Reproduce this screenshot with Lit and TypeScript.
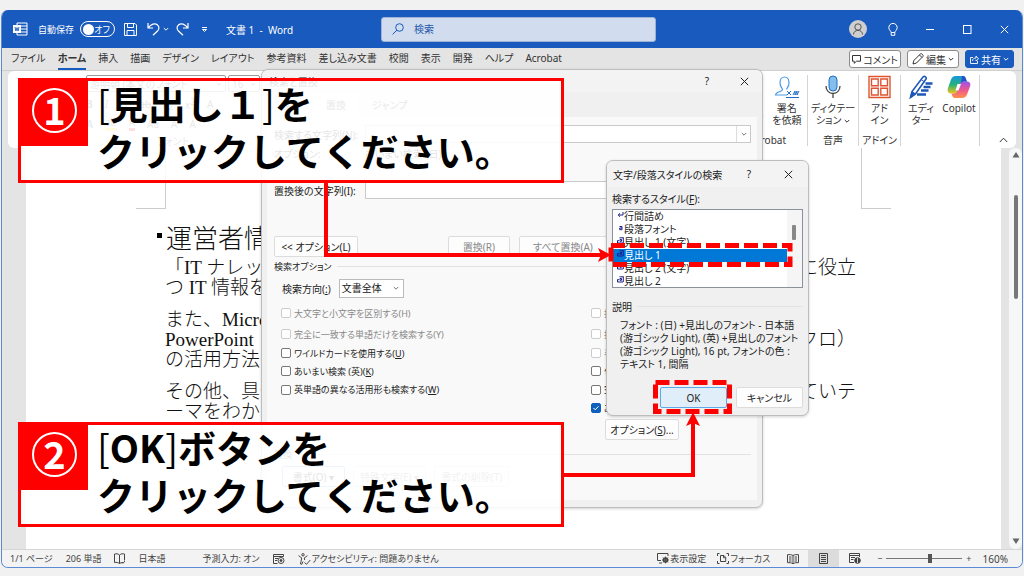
import { LitElement, html, css, svg } from "lit";
import { customElement, property } from "lit/decorators.js";

const base = css`
  * { box-sizing: border-box; }
  button, input, select {
    font: inherit; color: inherit; margin: 0; padding: 0;
    border: 0; background: none; border-radius: 0; appearance: none;
    font-feature-settings: inherit; white-space: nowrap;
  }
  a { color: inherit; text-decoration: none; }
  svg { display: block; flex: none; }
  u { text-underline-offset: 1px; }
`;

const chevron = (size = 6) => html`<svg width=${size} height=${size} viewBox="0 0 6 6" fill="none" stroke="currentColor"><path d="M.8 2 3 4.2 5.2 2" /></svg>`;
const cross = html`<svg width="9" height="9" viewBox="0 0 9 9" stroke="currentColor" fill="none"><path d="M.8.8 8.2 8.2M8.2.8.8 8.2" /></svg>`;

@customElement("title-bar")
class TitleBar extends LitElement {
  static styles = [base, css`
    :host { display: flex; align-items: center; height: 38px; padding: 0 13px 0 11px; background: #185abd; color: #fff; }
    .group { display: flex; align-items: center; flex: none; }
    .left { width: 368px; }
    .auto { margin: 0 6px 0 10px; font-size: 9px; }
    .toggle { display: flex; align-items: center; justify-content: space-between; width: 35px; height: 16px; padding: 0 4px 0 2px; border: 1px solid #fff; border-radius: 8px; font-size: 9px; }
    .knob { width: 11px; height: 11px; border-radius: 50%; background: #fff; }
    .save { margin-left: 9px; }
    .undo { margin-left: 10px; }
    .more { margin: 0 7px 0 3px; }
    .custom { margin-left: 12px; }
    .name { margin-left: 18px; white-space: pre; }
    .search { display: flex; align-items: center; flex: 0 1 275px; height: 25px; gap: 10px; padding: 0 10px; background: #d1dcef; border: 1px solid #9eb2d6; border-radius: 3px; color: #185abd; }
    .search input { flex: 1; min-width: 0; }
    .search input::placeholder { color: #2558a8; opacity: 1; }
    .right { margin-left: auto; gap: 28px; }
    .user { margin-right: -7px; }
  `];
  render() {
    return html`
      <div class="group left">
        <svg width="15" height="14" viewBox="0 0 15 14" fill="none" stroke="#fff"><path d="M4 3V1h10v12H4v-2M8 4h6M8 7h6M8 10h6" /><rect x=".5" y="3.5" width="7" height="7" fill="#fff" /><path d="m2 5 .9 4L4 5.6 5.1 9 6 5" stroke="#185abd" stroke-width=".9" /></svg>
        <span class="auto">自動保存</span>
        <button class="toggle" role="switch" aria-checked="false" aria-label="自動保存"><span class="knob"></span>オフ</button>
        <button class="save" aria-label="保存"><svg width="13" height="13" viewBox="0 0 13 13" fill="none" stroke="#fff"><path d="M.5.5H11L12.500 2v10.500H.5zM3.500.5v4h6v-4M3 12.500v-5h7v5" /></svg></button>
        <button class="undo" aria-label="元に戻す"><svg width="13" height="14" viewBox="0 0 13 14" fill="none" stroke="#fff" stroke-width="1.200"><path d="M1 1v5h5M1.200 5.800C4 2 8 .8 10.500 3c2.300 2.200 1.500 4.500 0 6L6 13.300" /></svg></button>
        <button class="more" aria-label="元に戻す履歴">${chevron()}</button>
        <button aria-label="やり直し"><svg width="13" height="14" viewBox="0 0 13 14" fill="none" stroke="#fff" stroke-width="1.200"><path d="M12 1v5H7M11.800 5.800C9 2 5 .8 2.500 3c-2.300 2.200-1.500 4.500 0 6L7 13.300" /></svg></button>
        <button class="custom" aria-label="クイック アクセス"><svg width="7" height="7" viewBox="0 0 7 7" fill="none" stroke="#fff"><path d="M1 1.500h5M1.500 3.500 3.500 5.500l2-2z" /></svg></button>
        <span class="name">文書 1  -  Word</span>
      </div>
      <label class="search">
        <svg width="12" height="12" viewBox="0 0 12 12" fill="none" stroke="currentColor"><circle cx="7.500" cy="4.500" r="3.800" /><path d="M4.800 7.200.6 11.400" /></svg>
        <input type="text" placeholder="検索" aria-label="検索" />
      </label>
      <div class="group right">
        <svg class="user" width="18" height="18" viewBox="0 0 18 18"><circle cx="9" cy="9" r="9" fill="#cfcfcf" /><g fill="none" stroke="#555"><circle cx="9" cy="7" r="3.200" /><path d="M4.500 14.500c0-5.500 9-5.500 9 0" /></g></svg>
        <svg width="10" height="13" viewBox="0 0 10 13" fill="none" stroke="#fff"><path d="M3.200 9.500C3 8 .8 7 .8 4.600a4.200 4.200 0 0 1 8.400 0C9.200 7 7 8 6.800 9.500zM3.200 9.500v2.800h3.600V9.500" /></svg>
        <button aria-label="最小化"><svg width="9" height="9" viewBox="0 0 9 9" stroke="#fff"><path d="M0 4.500h8" /></svg></button>
        <button aria-label="最大化"><svg width="9" height="9" viewBox="0 0 9 9" fill="none" stroke="#fff"><rect x=".5" y=".5" width="7.500" height="8" /></svg></button>
        <button aria-label="閉じる">${cross}</button>
      </div>`;
  }
}

@customElement("ribbon-tabs")
class RibbonTabs extends LitElement {
  static styles = [base, css`
    :host { display: flex; align-items: center; height: 23px; padding: 0 8px 0 9px; background: #e4e4e4; border-bottom: 1px solid #cfcfcf; }
    nav { display: flex; gap: 12px; }
    a { line-height: 19px; padding-top: 1px; white-space: nowrap; border-bottom: 2px solid transparent; }
    .on { font-weight: 700; border-color: #185abd; }
    .actions { margin-left: auto; display: flex; gap: 6px; }
    button { display: flex; align-items: center; justify-content: center; gap: 2px; height: 18px; padding: 0 4px; border: 1px solid #8c8c8c; border-radius: 3px; background: #fff; }
    .note { padding: 0 2px; }
    .share { background: #185abd; border-color: #185abd; color: #fff; }
  `];
  private tabs = ["ファイル", "ホーム", "挿入", "描画", "デザイン", "レイアウト", "参考資料", "差し込み文書", "校閲", "表示", "開発", "ヘルプ", "Acrobat"];
  render() {
    return html`
      <nav>${this.tabs.map(t => html`<a href="#" class=${t === "ホーム" ? "on" : ""}>${t}</a>`)}</nav>
      <div class="actions">
        <button class="note"><svg width="9" height="9" viewBox="0 0 9 9" fill="none" stroke="currentColor"><path d="M.5.5h8v5.700h-4L2.200 8.300V6.200H.5z" /></svg>コメント</button>
        <button><svg width="12" height="12" viewBox="0 0 12 12" fill="none" stroke="currentColor"><path d="m1 11 .8-3.500L8.500.9c1-.9 3.300 1.400 2.500 2.500l-6.600 6.700zM7.500 2 10 4.500" /></svg>編集 ${chevron()}</button>
        <button class="share"><svg width="9" height="9" viewBox="0 0 9 9" fill="none" stroke="currentColor" stroke-width=".9"><path d="M3 2.500H.5v6h7V6M2.500 6c.2-2.200 1.400-3 3.500-3V1l2.500 2.800L6 6V4.700" /></svg>共有 ${chevron()}</button>
      </div>`;
  }
}

@customElement("ribbon-panel")
class RibbonPanel extends LitElement {
  static styles = [base, css`
    :host { display: flex; height: 77px; margin: 0 6px; padding: 4px 4px 2px 10px; background: #fff; border-radius: 6px; }
    .clip { display: flex; align-items: flex-end; width: 68px; line-height: 12px; }
    .font { display: flex; flex-direction: column; gap: 4px; width: 174px; }
    .row { display: flex; align-items: center; gap: 12px; height: 17px; color: #444; white-space: nowrap; }
    .boxes { gap: 2px; }
    .box { display: flex; justify-content: space-between; align-items: center; flex: 1; height: 17px; padding: 0 3px; border: 1px solid #999; border-radius: 2px; }
    .small { flex: 0 0 32px; }
    .fill { color: #185abd; }
    .mark { border-bottom: 3px solid #ffe600; line-height: 12px; }
    .red { border-bottom: 3px solid #f00; line-height: 12px; }
    .cap { text-align: center; line-height: 12px; color: #555; }
    .groups { display: flex; margin-left: auto; }
    .group { display: flex; flex-direction: column; align-items: center; justify-content: space-between; padding: 0 3px; border-right: 1px solid #d4d4d4; }
    .items { display: flex; gap: 4px; }
    .item { display: flex; flex-direction: column; align-items: center; min-width: 34px; line-height: 12px; gap: 3px; }
    .item svg.big { height: 24px; }
    .words { display: block; text-align: center; }
    .words svg { display: inline; }
    .label { line-height: 12px; white-space: nowrap; height: 12px; }
    .fold { align-self: flex-end; padding: 0 4px 3px 19px; }
  `];
  render() {
    return html`
      <div class="clip">クリップボード</div>
      <div class="font">
        <div class="row boxes"><span class="box">游明朝 (本文のフォント ${chevron()}</span><span class="box small">16 ${chevron()}</span></div>
        <div class="row"><b>B</b><i>I</i><u>U</u><s>ab</s><span>x<sub>2</sub></span><span>x<sup>2</sup></span><span>A</span></div>
        <div class="row"><b class="fill">A</b><span class="mark">ab</span><span class="red">A</span><span>Aa</span><span>A</span><span>A</span></div>
        <span class="cap">フォント</span>
      </div>
      <div class="groups">
        <div class="group">
          <div class="items">
            <button class="item">
              <svg class="big" width="20" height="24" viewBox="0 0 20 24" fill="none" stroke="#4a9be8"><path d="M2 1.500h11l5 5v16H2z" /></svg>
              <span class="words">リンク<br />を共有</span>
            </button>
            <button class="item">
              <svg class="big" width="26" height="24" viewBox="0 0 26 24" fill="none" stroke="#4a9be8" stroke-width="1.200"><path d="M13 20H1.500c0-3.500 7-3 7-5.500 0-1.500-2.500-2.500-2.500-6.500s2-6 4.500-6S15 4 15 8s-2.500 5-2.500 6.500" /><path d="m13 16 4 4m0-4-4 4m6 0 2-4v4l2-4v4l2-4M12 22.500h13" stroke="#1f6fc5" stroke-width="1" /></svg>
              <span class="words">署名<br />を依頼</span>
            </button>
          </div>
          <span class="label">Acrobat</span>
        </div>
        <div class="group">
          <button class="item">
            <svg class="big" width="16" height="24" viewBox="0 0 16 24" fill="none" stroke="#444"><rect x="4" y="1" width="8" height="15" rx="4" fill="#83beec" stroke="#1f6fc5" /><path d="M1 11c0 10 14 10 14 0M8 18.500V23" stroke-width="1.300" /></svg>
            <span class="words">ディクテー<br />ション ${chevron()}</span>
          </button>
          <span class="label">音声</span>
        </div>
        <div class="group">
          <button class="item">
            <svg class="big" width="23" height="24" viewBox="0 0 23 24" fill="none" stroke="#e0532f" stroke-width="1.400"><path d="M1 1.500h21v21H1z" /><path d="M3.500 4h6.700v6.700H3.500zM12.800 4h6.700v6.700h-6.700zM3.500 13.300h6.700V20H3.500zM12.800 13.300h6.700V20h-6.700z" /></svg>
            <span class="words">アド<br />イン</span>
          </button>
          <span class="label">アドイン</span>
        </div>
        <div class="group">
          <div class="items">
            <button class="item">
              <svg class="big" width="24" height="24" viewBox="0 0 24 24" fill="none" stroke="#1f57b8"><path d="M16.500 8.500H23.500M14.500 12h7M12 15.500h7.500M8 19.500H17" stroke-width="2.400" /><path d="m1.500 22.500 1.500-6L14 2c1.500-1.500 4 .5 3 2L6.500 19z" fill="#fff" stroke-width="1.600" /><path d="m1.500 22.500 1.500-6 3.500 2.500zM12 4.500 15.500 7" fill="#1f57b8" /></svg>
              <span class="words">エディ<br />ター</span>
            </button>
            <button class="item">
              <svg class="big" width="24" height="24" viewBox="0 0 24 24">
                <defs>
                  <linearGradient id="ca" x1="0" y1="0" x2="0" y2="1"><stop offset="0" stop-color="#1796e0" /><stop offset=".5" stop-color="#23b37a" /><stop offset="1" stop-color="#f3c51b" /></linearGradient>
                  <linearGradient id="cb" x1="0" y1="0" x2="0" y2="1"><stop offset="0" stop-color="#9a55e8" /><stop offset=".5" stop-color="#ec5692" /><stop offset="1" stop-color="#ff9147" /></linearGradient>
                </defs>
                <path d="M9 1h7c2 0 2.500 1.500 3 3l.8 2.500H17c-2 0-3 1-3.500 2.500L11 16.500C10.300 18 9.500 18.500 8 18.500H4C1 18.500 0 16 1 13l3-8.500C5 2 6.500 1 9 1z" fill="url(#ca)" />
                <path d="M15 23H8c-2 0-2.500-1.500-3-3l-.5-1.500H7c2 0 3-1 3.500-2.500L13 8.500C13.700 7 14.500 6.500 16 6.500h4c3 0 4 2.500 3 5L20 19.500C19 22 17.500 23 15 23z" fill="url(#cb)" />
                <path d="M15 1h1c2 0 2.500 1.500 3 3l.8 2.500H17c-1.500 0-2.300.5-3 1.500z" fill="#2850cc" /><path d="m10.500 9-2 6.500h3L14 9z" fill="#fff" />
              </svg>
              <span class="words">Copilot</span>
            </button>
          </div>
        </div>
      </div>
      <button class="fold" aria-label="リボンを折りたたむ"><svg width="9" height="6" viewBox="0 0 9 6" fill="none" stroke="#333"><path d="M.8 5 4.500 1.200 8.200 5" /></svg></button>`;
  }
}

@customElement("document-view")
class DocumentView extends LitElement {
  static styles = [base, css`
    :host { display: flex; flex: 1; min-height: 0; padding-left: 24px; background: #e4e4e4; }
    .page { flex: 1; min-width: 0; padding: 0 110px; background: #fff; font-family: "Liberation Serif", "Noto Sans CJK JP", serif; font-size: 19px; line-height: 20px; color: #111; font-weight: 300; font-feature-settings: normal; }
    .marks { display: flex; justify-content: space-between; height: 61px; }
    .mark { width: 30px; border-bottom: 1px solid #ccc; }
    .mark.l { border-right: 1px solid #ccc; }
    .mark.r { border-left: 1px solid #ccc; }
    .text { padding: 12px 35px 0 21px; }
    h1 { display: flex; align-items: center; margin: 0; gap: 4px; font-size: 26px; font-weight: 300; line-height: 37px; white-space: nowrap; }
    .dot { width: 5px; height: 5px; margin-bottom: 8px; background: #000; }
    .para { margin: 0 0 12px 8px; }
    .line { display: flex; justify-content: space-between; white-space: pre; }
    .bar { display: flex; flex-direction: column; align-items: center; justify-content: space-between; width: 13px; margin-left: 8px; padding: 4px 0 5px; background: #f7f7f7; border-radius: 6px; }
    .track { flex: 1; padding-top: 37px; }
    .thumb { width: 4px; height: 104px; border-radius: 2px; background: #777; }
  `];
  private paras = [
    [["「IT ナレッジ", "に役立"], ["つ IT 情報を", ""]],
    [["また、Microsoft", ""], ["PowerPoint ", "クロ）"], ["の活用方法、", ""]],
    [["その他、具体", "ていテ"], ["ーマをわか", ""]],
  ];
  render() {
    return html`
      <div class="page">
        <div class="marks"><span class="mark l"></span><span class="mark r"></span></div>
        <div class="text">
          <h1><span class="dot"></span>運営者情報</h1>
          ${this.paras.map(p => html`<div class="para">${p.map(([a, b]) => html`<div class="line"><span>${a}</span><span>${b}</span></div>`)}</div>`)}
        </div>
      </div>
      <div class="bar">
        <svg width="8" height="6" viewBox="0 0 8 6" fill="#666"><path d="M4 0 7.500 5.500h-7z" /></svg>
        <div class="track"><div class="thumb"></div></div>
        <svg width="8" height="6" viewBox="0 0 8 6" fill="#666"><path d="M4 6 7.500.5h-7z" /></svg>
      </div>`;
  }
}

@customElement("status-bar")
class StatusBar extends LitElement {
  static styles = [base, css`
    :host { display: flex; align-items: center; height: 18px; padding: 0 14px 0 8px; background: #f3f3f3; border-top: 1px solid #d6d6d6; color: #444; font-size: 9px; white-space: nowrap; }
    .side { display: flex; align-items: center; gap: 13px; }
    .right { margin-left: auto; gap: 11px; }
    .pair { display: flex; align-items: center; gap: 1px; }
    .wide { margin-left: 24px; }
    .view { display: flex; align-items: center; justify-content: center; width: 31px; height: 17px; }
    .on { background: #dcdcdc; }
    .views { display: flex; margin: 0 -4px; }
    .zoom { display: flex; align-items: center; gap: 4px; }
    input { width: 76px; height: 12px; background: linear-gradient(#777, #777) center / 100% 1px no-repeat; }
    input::-webkit-slider-thumb { appearance: none; width: 4px; height: 9px; background: #555; }
    .pct { font-size: 10px; }
  `];
  render() {
    return html`
      <div class="side">
        <span>1/1 ページ</span><span>206 単語</span>
        <svg width="11" height="11" viewBox="0 0 11 11" fill="none" stroke="currentColor"><path d="M5.500 2C4 .6 2 .6.500 1v8.500c2-.3 3.500 0 5 1 1-.7 2-.9 3-.9M5.500 2v8.500M5.500 2C7 .6 9 .6 10.500 1v6.500M8 9l1 1.300L11 8" /></svg>
        <span>日本語</span>
        <span class="wide">予測入力: オン</span>
        <svg width="12" height="10" viewBox="0 0 12 10" fill="none" stroke="currentColor"><path d="M4.500 9.500h-4v-9h10v2M.500 2.500h10M2 4.500h3M2 6.500h2" /><circle cx="8" cy="6.500" r="3" /><circle cx="8" cy="6.500" r="1" fill="currentColor" /></svg>
        <span class="pair"><svg width="13" height="12" viewBox="0 0 13 12" fill="none" stroke="currentColor"><circle cx="5" cy="1.800" r="1.200" /><path d="M.8 2.500C1 4 3.500 4 3.700 5L2.500 11l1.300.3L5 8.500M9.200 2.500C9 4 6.500 4 6.300 5l.4 2M6.500 9.500l2 1.800L12.300 7" /></svg>アクセシビリティ: 問題ありません</span>
      </div>
      <div class="side right">
        <span class="pair"><svg width="12" height="11" viewBox="0 0 12 11" fill="none" stroke="currentColor"><path d="M4 7.500H.500v-7h10.500V3M2 10h3" /><circle cx="8.500" cy="7" r="2" stroke-width="1.600" /><path d="M8.500 3.500v7M5 7h7M6 4.500l5 5M11 4.500l-5 5" stroke-width=".8" /></svg>表示設定</span>
        <span class="pair"><svg width="12" height="11" viewBox="0 0 12 11" fill="none" stroke="currentColor"><path d="M.5 3V.5h2M9.500.5h2V3M.5 8v2.500h2M9.500 10.500h2V8M3.500 2.500H7L8.700 4.500v4H3.500zM6.500 2.500v2.200h2" /></svg>フォーカス</span>
        <span class="views">
          <button class="view" aria-label="閲覧モード"><svg width="12" height="10" viewBox="0 0 12 10" fill="none" stroke="currentColor"><path d="M6 1.500C4.500.5 2.500.5.500.700v8c2-.2 4 0 5.500 1 1.500-1 3.500-1.200 5.500-1v-8c-2-.2-4-.2-5.500.800zv8M2 3h2.500M2 5h2.500M2 7h2.500M7.500 3H10M7.500 5H10M7.500 7H10" /></svg></button>
          <button class="view on" aria-label="印刷レイアウト"><svg width="9" height="11" viewBox="0 0 9 11" fill="none" stroke="currentColor"><path d="M.5.5h8v10h-8zM2 2.500h5M2 4.500h5M2 6.500h5M2 8.500h5" /></svg></button>
          <button class="view" aria-label="Web レイアウト"><svg width="12" height="11" viewBox="0 0 12 11" fill="none" stroke="currentColor"><path d="M5 9.500H.5v-9h10V4M.5 2.500h10M2 4.500h4M2 6.500h2.500" /><circle cx="8.500" cy="7.500" r="2.800" fill="currentColor" /><path d="M8.500 5v5" stroke="#f3f3f3" stroke-width=".8" /></svg></button>
        </span>
        <span class="zoom"><span>−</span><input type="range" min="0" max="100" value="58" aria-label="ズーム" /><span>+</span></span>
        <span class="pct">160%</span>
      </div>`;
  }
}

const dialogStyles = css`
  :host { display: flex; flex-direction: column; background: #f0f0f0; border: 1px solid #bdbdbd; border-radius: 7px; box-shadow: 0 1px 3px rgba(0, 0, 0, .18); overflow: hidden; color: #222; white-space: nowrap; }
  .head { display: flex; align-items: center; flex: none; background: #f3f3f3; }
  .head .q { margin-left: auto; margin-right: 31px; }
  .btn { display: flex; align-items: center; justify-content: center; height: 21px; padding: 0 6px; background: #fdfdfd; border: 1px solid #dcdcdc; border-radius: 2px; }
  .legend { display: flex; align-items: center; gap: 5px; height: 18px; }
  .legend::after { content: ""; flex: 1; height: 1px; background: #e2e2e2; }
`;

@customElement("find-dialog")
class FindDialog extends LitElement {
  static styles = [base, dialogStyles, css`
    .head { height: 22px; padding: 0 13px 0 7px; }
    .tabs { display: flex; align-items: stretch; height: 25px; padding: 0 6px; gap: 2px; color: #444; }
    .tab { padding: 0 12px; }
    .tab.on { background: #f9f9f9; }
    .panel { margin: 0 5px 7px; padding: 8px 6px 0 7px; flex: 1; background: #f9f9f9; }
    .field { display: grid; grid-template-columns: 85px 1fr; gap: 6px; align-items: center; height: 18px; }
    .combo { display: flex; height: 18px; border: 1px solid #c9c9c9; background: #fff; }
    .combo input { flex: 1; min-width: 0; padding: 0 4px; }
    .drop { display: flex; align-items: center; justify-content: center; width: 14px; border-left: 1px solid #ddd; color: #777; }
    .info { height: 20px; margin-bottom: 18px; }
    .buttons { display: flex; gap: 9px; margin: 37px 0 0; }
    .first { width: 84px; margin-right: auto; }
    .mid { width: 62px; } .long { width: 88px; }
    .gap { width: 135px; }
    .off { color: #888; }
    .dir { display: flex; align-items: center; gap: 8px; height: 20px; margin: 3px 0 4px 8px; }
    .pick { display: flex; align-items: center; width: 65px; height: 19px; border: 1px solid #bbb; background: #fff; }
    .pick select { flex: 1; min-width: 0; padding-left: 2px; height: 17px; }
    .pick svg { margin: 0 4px 0 2px; color: #777; }
    .checks { display: grid; grid-template-columns: 310px 1fr; grid-auto-flow: column; grid-template-rows: 22px 20px 18px 18px 19px 18px; margin: 0 0 2px 7px; align-items: center; font-size: 9px; }
    .check { display: flex; align-items: center; gap: 3px; height: 18px; }
    .check input { width: 10px; height: 10px; flex: none; border: 1px solid #777; border-radius: 2px; background: #fff; }
    .check.off input { border-color: #ccc; }
    .check input:checked { border-color: #0f5fbd; background: #0f5fbd url('data:image/svg+xml,<svg xmlns="http://www.w3.org/2000/svg" viewBox="0 0 8 8" fill="none" stroke="white"><path d="M1.500 4 3.200 5.800 6.500 2.300"/></svg>') center / 8px no-repeat; }
    .opt { width: 74px; margin-left: 331px; }
    .legend { font-size: 9px; }
    .formats { display: flex; gap: 8px; margin: 3px 0 0 8px; }
    .formats .btn { min-width: 63px; }
    .focus { border-color: #7aaee6; }
    .base { margin-top: 5px; }
  `];
  private box(text: string, key: string, off: boolean, checked = false) {
    return html`<label class="check ${off ? "off" : ""}"><input type="checkbox" ?checked=${checked} ?disabled=${off} /><span>${text}(${off ? key : html`<u>${key}</u>`})</span></label>`;
  }
  private combo(id: string) {
    return html`<span class="combo"><input id=${id} type="text" /><button class="drop" aria-label="履歴">${chevron()}</button></span>`;
  }
  render() {
    return html`
      <div class="head"><span>検索と置換</span><button class="q">?</button><button aria-label="閉じる">${cross}</button></div>
      <div class="tabs"><button class="tab">検索</button><button class="tab on">置換</button><button class="tab">ジャンプ</button></div>
      <div class="panel">
        <div class="field"><label for="find">検索する文字列(N):</label>${this.combo("find")}</div>
        <div class="field info"><span>オプション:</span><span>あいまい検索 (日)</span></div>
        <div class="field"><label for="with">置換後の文字列(I):</label>${this.combo("with")}</div>
        <div class="buttons"><button class="btn first">&lt;&lt; オプション(L)</button><button class="btn off mid">置換(R)</button><button class="btn off long">すべて置換(A)</button><span class="gap"></span></div>
        <div class="legend">検索オプション</div>
        <div class="dir"><label for="dir">検索方向(<u>:</u>)</label><span class="pick"><select id="dir"><option>文書全体</option></select>${chevron()}</span></div>
        <div class="checks">
          ${this.box("大文字と小文字を区別する", "H", true)}
          ${this.box("完全に一致する単語だけを検索する", "Y", true)}
          ${this.box("ワイルドカードを使用する", "U", false)}
          ${this.box("あいまい検索 (英)", "K", false)}
          ${this.box("英単語の異なる活用形も検索する", "W", false)}
          <span></span>
          ${this.box("接頭辞に一致する", "X", true)}
          ${this.box("接尾辞に一致する", "T", true)}
          ${this.box("半角と全角を区別する", "M", true)}
          ${this.box("句読点を無視する", "S", false)}
          ${this.box("空白文字を無視する", "W", false)}
          ${this.box("あいまい検索 (日)", "J", false, true)}
        </div>
        <button class="btn opt">オプション(<u>S</u>)...</button>
        <div class="legend base">置換</div>
        <div class="formats"><button class="btn focus">書式(O) ▾</button><button class="btn off">特殊文字(E) ▾</button><button class="btn off">書式の削除(T)</button></div>
      </div>`;
  }
}

@customElement("style-dialog")
class StyleDialog extends LitElement {
  static styles = [base, dialogStyles, css`
    .head { height: 26px; padding: 0 15px 0 6px; }
    .head .q { margin-right: 33px; }
    .body { padding: 3px 5px 6px; }
    .cap { display: block; height: 19px; line-height: 18px; }
    .list { display: flex; height: 79px; border: 1px solid #8b929b; background: #fff; }
    ul { flex: 1; margin: 0; padding: 0; list-style: none; overflow: hidden; }
    li { display: flex; align-items: center; height: 13px; padding-left: 4px; line-height: 13px; }
    li svg { margin-bottom: 4px; color: #1c1c8c; }
    li.on { background: #0078d7; color: #fff; }
    .scroll { width: 15px; padding: 15px 5px; background: #f5f5f5; }
    .thumb { height: 15px; width: 4px; background: #888; border-radius: 1px; }
    .legend { margin-top: 9px; }
    .desc { margin: 4px 0 16px 8px; line-height: 13px; }
    .row { display: flex; justify-content: flex-end; gap: 9px; }
    .row .btn { width: 67px; }
    .row .ok { border-color: #5ea8e6; background: #e0eef9; }
  `];
  private items: [string, string][] = [["行間詰め", "p"], ["段落フォント", "a"], ["見出し 1 (文字)", "m"], ["見出し 1", "m"], ["見出し 2 (文字)", "m"], ["見出し 2", "m"]];
  private glyph(kind: string) {
    const shape = kind === "p" ? svg`<path d="M6 1v3H1.500M3 2.300 1.200 4 3 5.700" />`
      : kind === "a" ? svg`<path d="M2.500 2.500h2.500v3.200H2.700V4H5" />`
      : svg`<path d="M.5 3.500v2.500H6M.5 3.700H2M3 2.500h1.500v1.800H3zM6.300.5v5.500M2.500.8h4" />`;
    return html`<svg width="7" height="7" viewBox="0 0 7 7" fill="none" stroke="currentColor">${shape}</svg>`;
  }
  render() {
    return html`
      <div class="head"><span>文字/段落スタイルの検索</span><button class="q">?</button><button aria-label="閉じる">${cross}</button></div>
      <div class="body">
        <span class="cap" id="cap">検索するスタイル(<u>F</u>):</span>
        <div class="list">
          <ul role="listbox" aria-labelledby="cap">${this.items.map(([t, k]) => html`<li role="option" class=${t === "見出し 1" ? "on" : ""} aria-selected=${t === "見出し 1"}>${this.glyph(k)}${t}</li>`)}</ul>
          <div class="scroll"><div class="thumb"></div></div>
        </div>
        <div class="legend">説明</div>
        <div class="desc">フォント : (日) +見出しのフォント - 日本語<br />(游ゴシック Light), (英) +見出しのフォント<br />(游ゴシック Light), 16 pt, フォントの色 :<br />テキスト 1, 間隔</div>
        <div class="row"><button class="btn ok">OK</button><button class="btn">キャンセル</button></div>
      </div>`;
  }
}

@customElement("step-note")
class StepNote extends LitElement {
  @property() num = "";
  @property() key = "";
  static styles = [base, css`
    :host { display: flex; height: 105px; border: 3px solid #f00; background: rgba(255, 255, 255, .88); font-family: "Noto Sans CJK JP", sans-serif; font-feature-settings: normal; }
    .badge { display: flex; justify-content: center; width: 67px; height: 65px; padding-top: 7px; flex: none; background: #f00; }
    .ring { display: flex; align-items: center; justify-content: center; width: 45px; height: 45px; padding-bottom: 4px; border: 2px solid #fff; border-radius: 50%; color: #fff; font-size: 38px; line-height: 38px; font-weight: 700; }
    p { margin: -2px 0 0 9px; font-size: 38px; line-height: 47px; font-weight: 700; color: #000; white-space: nowrap; }
    .thin { font-weight: 400; }
  `];
  render() {
    return html`<div class="badge"><span class="ring">${this.num}</span></div><p><span class="thin">[</span>${this.key}<span class="thin">]</span>${this.num === "2" ? "ボタンを" : "を"}<br />クリックしてください。</p>`;
  }
}

@customElement("app-root")
class AppRoot extends LitElement {
  static styles = [base, css`
    :host { display: block; position: relative; box-sizing: border-box; height: 100vh; padding: 10px 0 8px; overflow: hidden; background: #f1f1f1; color: #333; font-family: "Noto Sans", "Noto Sans CJK JP", sans-serif; font-size: 10px; font-feature-settings: "palt"; }
    .window { display: flex; flex-direction: column; height: 100%; margin: 0 1px; border: 1px solid #5b8bd6; border-top: 0; border-radius: 7px; overflow: hidden; background: #e4e4e4; }
    .find { position: absolute; left: 261px; top: 69px; width: 502px; height: 439px; }
    .style { position: absolute; left: 606px; top: 160px; width: 203px; height: 256px; }
    .note { position: absolute; left: 18px; width: 546px; }
    .one { top: 78px; }
    .two { top: 422px; }
    .arrows { position: absolute; left: 0; top: 0; pointer-events: none; }
  `];
  render() {
    return html`
      <div class="window">
        <title-bar></title-bar>
        <ribbon-tabs></ribbon-tabs>
        <ribbon-panel></ribbon-panel>
        <document-view></document-view>
        <status-bar></status-bar>
      </div>
      <find-dialog class="find"></find-dialog>
      <style-dialog class="style"></style-dialog>
      <step-note class="note one" num="1" key="見出し１"></step-note>
      <step-note class="note two" num="2" key="OK"></step-note>
      <svg class="arrows" width="1024" height="576" viewBox="0 0 1024 576" fill="none" stroke="#f00">
        <path d="M326 182V255H602" stroke-width="4" />
        <path d="M598 248 611 255 598 262 601 255z" fill="#f00" stroke="none" />
        <path d="M563 475H693V420" stroke-width="4" />
        <path d="M686 426 693 412 700 426 693 423z" fill="#f00" stroke="none" />
        <rect x="611" y="245.500" width="179" height="19" stroke-width="5" stroke-dasharray="14 5" />
        <rect x="655.500" y="382.500" width="74" height="29" stroke-width="5" stroke-dasharray="14 5" />
      </svg>`;
  }
}
